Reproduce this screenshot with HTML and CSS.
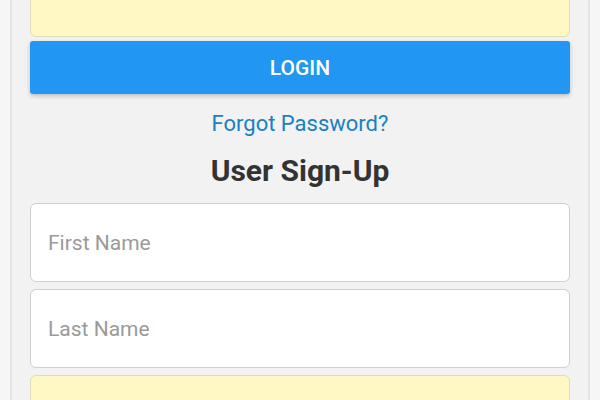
FILE: index.html
```html
<!DOCTYPE html>
<html lang="en">
<head>
  <meta charset="UTF-8">
  <meta name="viewport" content="width=device-width, initial-scale=1.0">
  <title>Login & Sign-Up</title>
  <link rel="stylesheet" href="styles.css">
</head>
<body>
  <div class="container">
    <!-- Login Form -->
    <form class="login-form" id="loginForm">
      <input type="password" class="filled" id="loginPassword" value="password" placeholder="Password">
      <button type="submit">LOGIN</button>
      <a href="#" class="forgot">Forgot Password?</a>
    </form>

    <!-- Sign-Up Form -->
    <h1>User Sign-Up</h1>
    <form class="signup-form" id="signupForm">
      <input type="text" id="firstName" placeholder="First Name">
      <input type="text" id="lastName" placeholder="Last Name">
      <input type="email" class="filled" id="signupEmail" placeholder="">
    </form>
  </div>
</body>
</html>
```

FILE: styles.css
```css
body {
  font-family: Roboto, 'Noto Sans', sans-serif;
  margin: 0;
  padding: 0;
  background-color: #f6f6f6;
  height: 400px;
  overflow: hidden;
}

.container {
  margin: 0 10px;
  padding: 0 18px;
  min-height: 400px;
  background: #f2f2f2;
  border-left: 2px solid #e4e4e4;
  border-right: 2px solid #e4e4e4;
}

form {
  display: flex;
  flex-direction: column;
}

.login-form {
  margin-top: -42px;
}

form input {
  box-sizing: border-box;
  width: 100%;
  height: 79px;
  padding: 0 17px;
  border: 1px solid #cfcfcf;
  border-radius: 6px;
  background: #fff;
  font-family: inherit;
  font-size: 21px;
  color: #333;
}

form input::placeholder {
  color: #9a9a9a;
}

form input.filled {
  background: #fff8c4;
  border-color: #e2dcb4;
}

form button {
  height: 53px;
  margin-top: 4px;
  border: none;
  border-radius: 3px;
  background: #2196f3;
  color: #fff;
  font-family: inherit;
  font-size: 21px;
  font-weight: 500;
  box-shadow: 0 2px 4px rgba(0, 0, 0, 0.22);
  cursor: pointer;
}

.forgot {
  align-self: center;
  margin-top: 17px;
  color: #1b7fc4;
  font-size: 22px;
  text-decoration: none;
}

h1 {
  margin: 17px 0 15px;
  text-align: center;
  font-size: 30px;
  font-weight: 700;
  color: #333;
}

.signup-form {
  gap: 7px;
}
```
